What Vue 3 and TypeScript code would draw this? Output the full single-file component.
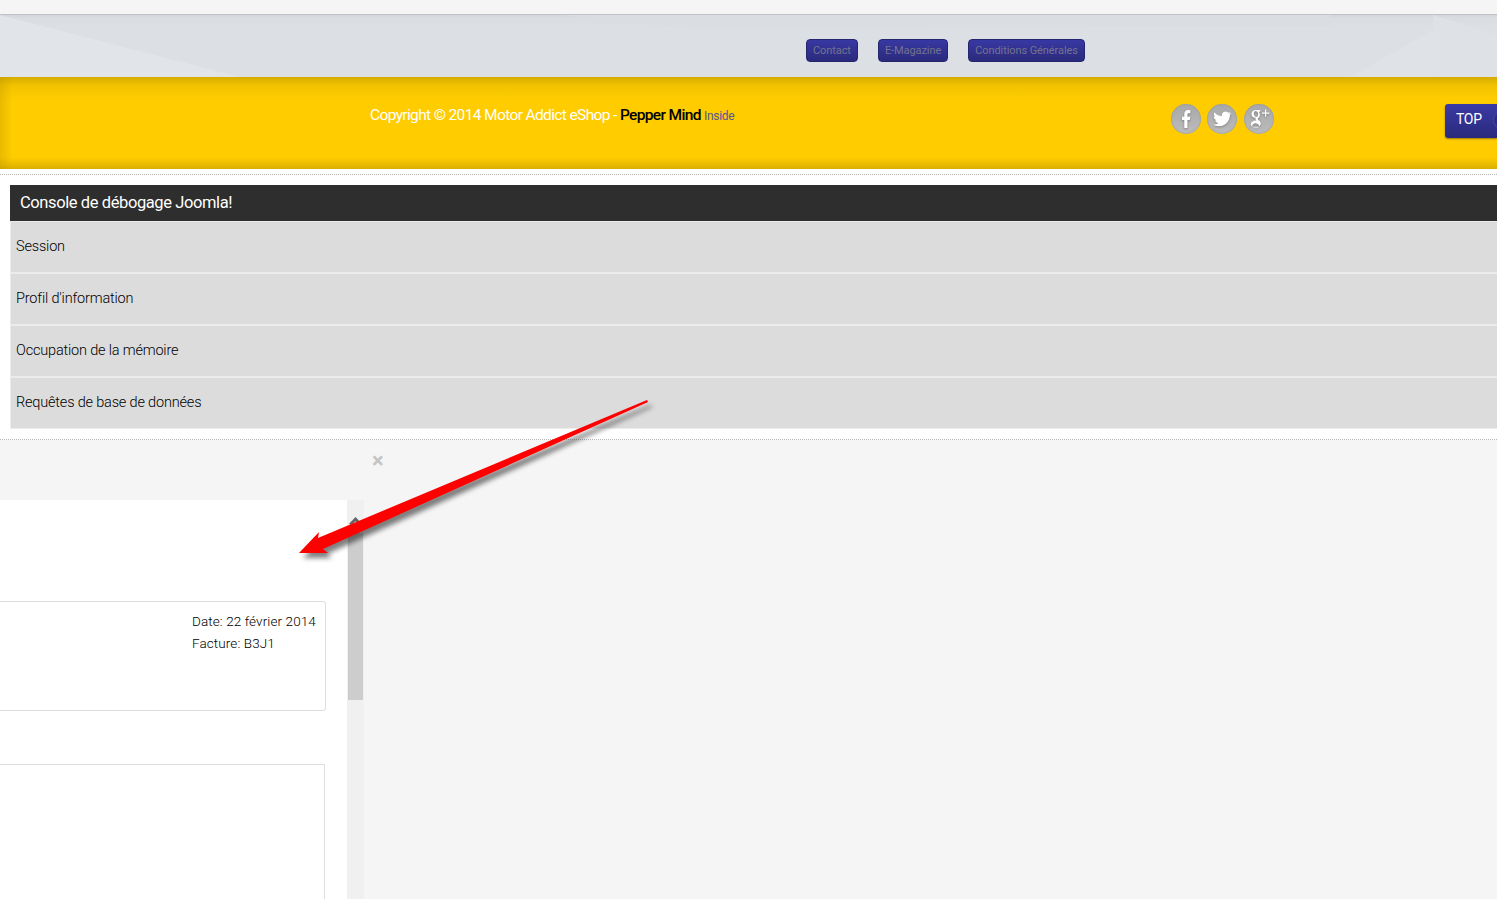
<script setup lang="ts">
const links = ['Contact', 'E-Magazine', 'Conditions Générales']
const rows = ['Session', "Profil d'information", 'Occupation de la mémoire', 'Requêtes de base de données']
</script>

<template>
  <div class="page">
    <div class="topstrip"></div>
    <nav class="band">
      <svg class="facets" viewBox="0 0 1497 62" preserveAspectRatio="none" aria-hidden="true">
        <polygon points="0,0 240,62 0,62" fill="#e1e4e9" />
        <polygon points="560,0 1330,0 1330,10 700,14" fill="#dadde1" />
        <polygon points="1350,62 1433,15 1433,62" fill="#dfe2e6" />
        <polygon points="1433,0 1497,20 1497,62 1433,62" fill="#dee1e5" />
      </svg>
      <a v-for="l in links" :key="l" class="pill">{{ l }}</a>
    </nav>
    <footer class="gold">
      <p class="copy">Copyright © 2014 Motor Addict eShop - <b>Pepper Mind</b> <span>Inside</span></p>
      <div class="social">
        <span class="disc">
          <svg viewBox="0 0 30 30"><path d="M16.400 24v-8h2.400l.4-3.200h-2.800v-2c0-1 .3-1.600 1.500-1.600h1.400V6.200c-.3 0-1.100-.2-2.200-.2-2.300 0-3.800 1.600-3.800 4.300v2.500h-2.300V16h2.300v8z" fill="#fff"/></svg>
        </span>
        <span class="disc">
          <svg viewBox="0 0 30 30"><path d="M24 9.200c-.7.300-1.400.5-2.100.6.800-.5 1.300-1.200 1.600-2-.7.400-1.500.7-2.300.9a3.700 3.700 0 0 0-6.300 3.400C11.800 11.900 9.100 10.500 7.300 8.200c-1 1.700-.5 3.800 1.100 4.900-.6 0-1.200-.2-1.700-.5 0 1.800 1.300 3.300 3 3.700-.5.100-1.100.2-1.700.1.500 1.500 1.900 2.500 3.500 2.600-1.600 1.200-3.500 1.800-5.500 1.600 5.800 3.500 12 1.200 14.900-3.200 1.500-2.200 2.100-4.700 2-6.700.7-.5 1.300-1.100 1.800-1.800z" fill="#fff"/></svg>
        </span>
        <span class="disc third">
          <svg viewBox="0 0 30 30"><path d="M16.500 6H11.800C9.300 6 7.400 7.800 7.400 10c0 2.200 1.700 3.800 3.800 3.800h.6c-.2.400-.3.800-.3 1.200 0 .7.300 1.100.8 1.500-3.300.1-5.500 1.900-5.500 3.900 0 2 2 3.200 4.600 3.200 3.200 0 5.300-2 5.300-4.100 0-1.600-.8-2.400-2-3.300-.5-.4-1-.9-1-1.300 0-1 2.200-1.500 2.200-4 0-1.400-.7-2.500-1.400-3.100h1.400zM12.300 13c-1.300 0-2.300-1.400-2.500-3-.2-1.700.6-2.900 1.900-2.900s2.300 1.400 2.500 3c.2 1.700-.6 2.900-1.900 2.900zM11.500 24.100c-2 0-3.300-1-3.300-2.400s1.700-2.400 3.500-2.400c2.200.7 3.400 1.300 3.400 2.500 0 1.400-1.300 2.300-3.600 2.300z" fill="#fff"/><path d="M21 5.500v3h-3v1.200h3v3h1.200v-3h3V8.500h-3v-3z" fill="#fff"/></svg>
        </span>
      </div>
      <a class="top">TOP<i></i></a>
    </footer>
    <div class="whitearea">
      <hr class="dash first" />
      <section class="console">
        <h2>Console de débogage Joomla!</h2>
        <div v-for="r in rows" :key="r" class="row">{{ r }}</div>
      </section>
      <hr class="dash second" />
    </div>
    <main class="lower">
      <div class="closebar"><span class="x">×</span></div>
      <div class="modal">
        <div class="modalbody">
          <div class="card info">
            <div class="meta">
              <div>Date: 22 février 2014</div>
              <div>Facture: B3J1</div>
            </div>
          </div>
          <div class="card blank"></div>
        </div>
        <div class="track"><div class="thumb"></div></div>
      </div>
    </main>
    <svg class="arrow" viewBox="0 0 1497 899" aria-hidden="true">
      <defs>
        <filter id="blur" x="-20%" y="-20%" width="140%" height="140%"><feGaussianBlur stdDeviation="2.500" /></filter>
      </defs>
      <polygon points="303,558 323,537 322,543 651,405 652,407 327,554 332,558" fill="#000" opacity=".5" filter="url(#blur)" />
      <polygon points="299,553 319,532 318,538 647,400 648,402 323,549 328,553" fill="#ff0000" />
    </svg>
  </div>
</template>

<style>
html, body { margin: 0; background: #f5f5f5; }
</style>

<style scoped>
.page { position: relative; width: 1497px; height: 899px; overflow: hidden; background: #f5f5f5; font-family: "Roboto", "Liberation Sans", sans-serif; color: #000; }
.topstrip { height: 14px; background: #f5f5f5; }
.band { position: relative; height: 63px; box-sizing: border-box; display: flex; align-items: flex-start; gap: 20px; padding: 24px 0 0 806px; background: linear-gradient(#d2d5d9 0, #d9dce0 3px, #dcdfe4 12px); border-top: 1px solid #c0c1c5; }
.facets { position: absolute; inset: 0; width: 100%; height: 100%; }
.pill { position: relative; height: 23px; box-sizing: border-box; padding: 0 6px; display: flex; align-items: center; font-size: 11px; letter-spacing: -.08px; color: #73738c; background: linear-gradient(#3838a4, #2a2a7c); border: 1px solid #25256e; border-radius: 4px; white-space: nowrap; }
.gold { position: relative; height: 92px; display: flex; align-items: flex-start; background: linear-gradient(90deg, rgba(190, 150, 0, .35) 0, rgba(190, 150, 0, 0) 12px), linear-gradient(#d5ad00 0, #f2c300 9px, #ffcc00 22px, #ffcc00 80px, #ebbd00 87px, #d9ae00 92px); }
.copy { margin: 29px 0 0 370px; width: 801px; font-size: 15.500px; letter-spacing: -.63px; line-height: 18px; color: #fff; white-space: nowrap; }
.copy b { color: #000; font-weight: 500; letter-spacing: -.65px; }
.copy span { font-size: 12px; letter-spacing: -.3px; color: #56569a; }
.social { display: flex; gap: 6px; margin-top: 27px; }
.disc { width: 30px; height: 30px; border-radius: 50%; background: linear-gradient(#a8a8a8, #bcbcbc); box-shadow: inset 0 0 2px #8f8f8f; display: block; }
.third { margin-left: 1px; }
.disc svg { width: 30px; height: 30px; display: block; filter: drop-shadow(0 1px 1px rgba(0, 0, 0, .3)); }
.top { margin: 27px 0 0 171px; flex: 1; height: 34px; box-sizing: border-box; padding: 0 0 4px 11px; display: flex; align-items: center; font-size: 14px; letter-spacing: -.3px; color: #fff; background: linear-gradient(#3a3aa6, #2a2a7c); border-radius: 3px 0 0 3px; box-shadow: 0 1px 2px rgba(0, 0, 0, .4); position: relative; overflow: hidden; }
.top i { position: absolute; left: 49px; top: 8px; width: 16px; height: 16px; border-radius: 50%; background: #2c2c84; box-shadow: 0 0 0 1px #45459f; }
.whitearea { height: 271px; background: #fff; display: flex; flex-direction: column; }
.dash { margin: 0; border: 0; border-top: 1px dotted #b5b5b5; }
.first { margin-top: 5px; }
.console { margin: 10px 0 0 10px; }
.console h2 { margin: 0; height: 36px; line-height: 35px; padding-left: 10px; font-size: 16.500px; font-weight: 400; letter-spacing: -.4px; color: #fff; background: #2e2e2e; }
.row { height: 52px; box-sizing: border-box; padding: 0 0 2px 5px; display: flex; align-items: center; font-size: 14.500px; font-weight: 300; letter-spacing: -.18px; background: #dcdcdc; border: 1px solid #ececec; border-width: 1px 0 1px 1px; }
.second { margin-top: 10px; }
.lower { height: 460px; }
.closebar { height: 60px; padding: 9px 0 0 372px; box-sizing: border-box; }
.x { font-size: 22px; line-height: 24px; font-weight: 700; color: #c4c4c4; }
.modal { display: flex; width: 364px; height: 399px; }
.modalbody { width: 347px; background: #fff; padding-top: 101px; box-sizing: border-box; }
.card { box-sizing: border-box; background: #fff; border: 1px solid #dedede; border-left: 0; }
.info { width: 326px; height: 110px; border-radius: 0 3px 3px 0; padding: 8px 9px 0 0; display: flex; justify-content: flex-end; font-size: 13.500px; font-weight: 300; letter-spacing: .1px; line-height: 22px; }
.meta { width: 124px; white-space: nowrap; }
.blank { width: 325px; height: 140px; margin-top: 53px; }
.track { width: 17px; background: #f0f0f0; padding: 33px 0 0 1px; box-sizing: border-box; position: relative; }
.track::before { content: ""; position: absolute; left: 4px; top: 19px; width: 6px; height: 6px; border: solid #666; border-width: 3px 0 0 3px; transform: rotate(45deg); }
.thumb { width: 15px; height: 167px; background: #cdcdcd; }
.arrow { position: absolute; left: 0; top: 0; width: 1497px; height: 899px; pointer-events: none; }
</style>
